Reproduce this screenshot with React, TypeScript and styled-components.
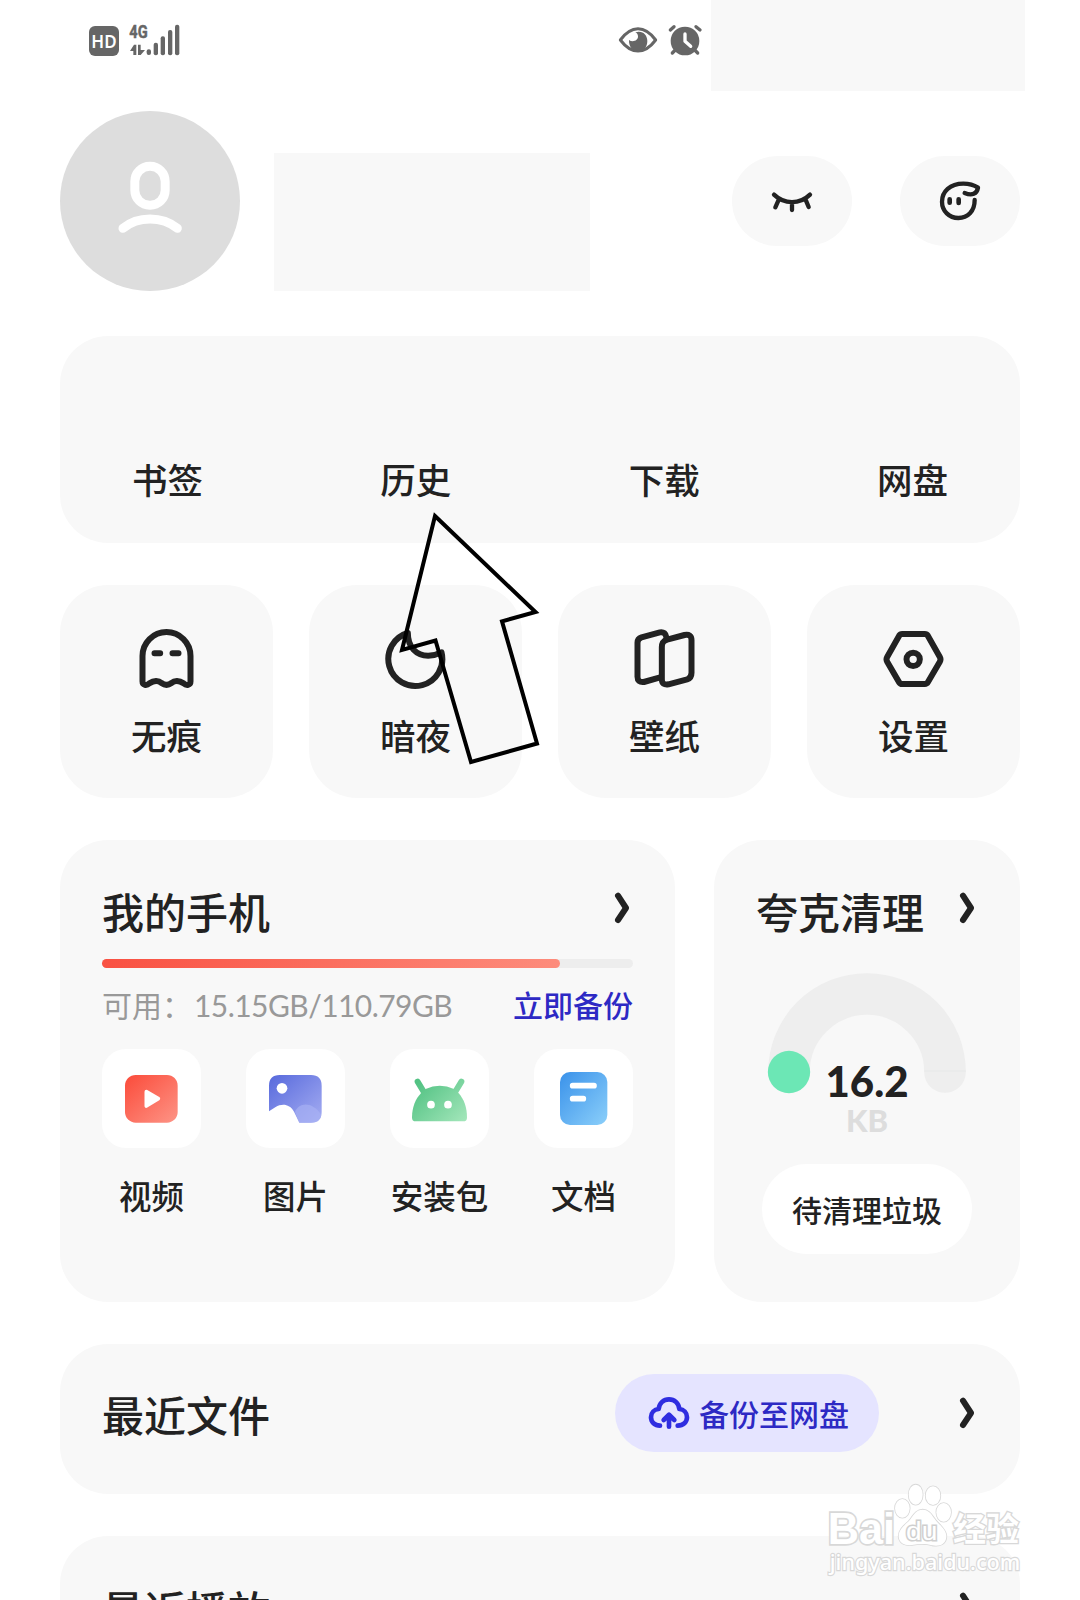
import React from "react";
import styled, { createGlobalStyle } from "styled-components";

const INK = "#222222";
const PANEL = "#f8f8f8";
const BLUE = "#2d29c4";

const GlobalStyle = createGlobalStyle`
  * { box-sizing: border-box; }
  html, body { margin: 0; background: #ffffff; }
  body {
    font-family: "Noto Sans CJK SC", "Noto Sans", sans-serif;
    font-weight: 500;
    color: ${INK};
  }
  svg { display: block; flex: none; }
`;

const Page = styled.main`
  position: relative;
  display: flex;
  flex-direction: column;
  width: 1080px;
  height: 1600px;
  overflow: hidden;
  background: #ffffff;
`;

const StatusBar = styled.header`
  display: flex;
  align-items: flex-start;
  justify-content: space-between;
  height: 90px;
  padding: 0 55px 0 89px;
`;

const StatusGroup = styled.div<{ $gap: number; $top: number }>`
  display: flex;
  align-items: flex-start;
  gap: ${(p) => p.$gap}px;
  padding-top: ${(p) => p.$top}px;
`;

const HdBadge = styled.span`
  display: flex;
  align-items: center;
  justify-content: center;
  width: 30px;
  height: 30px;
  margin-top: 4px;
  border-radius: 6px;
  background: #666666;
  color: #ffffff;
  font: 600 17px/31px "Noto Sans", sans-serif;
`;

const StatusRight = styled.div`
  display: flex;
  gap: 8px;
`;

const StatusMask = styled.div`
  width: 314.500px;
  height: 90.500px;
  background: ${PANEL};
`;

const Profile = styled.section`
  display: flex;
  align-items: center;
  height: 180px;
  margin: 21px 60px 0;
`;

const Avatar = styled.div`
  display: flex;
  align-items: center;
  justify-content: center;
  width: 180px;
  height: 180px;
  border-radius: 50%;
  background: #dddddd;
`;

const NameMask = styled.div`
  align-self: flex-end;
  width: 316px;
  height: 138px;
  margin: 0 auto 0 33.500px;
  background: ${PANEL};
`;

const RoundButton = styled.button`
  display: flex;
  align-items: center;
  justify-content: center;
  width: 120px;
  height: 90px;
  margin-left: 48px;
  padding: 0;
  border: 0;
  border-radius: 45px;
  background: ${PANEL};
`;

const Content = styled.div`
  display: flex;
  flex-direction: column;
  flex: none;
  gap: 42px;
  padding: 45px 60px 0;
`;

const Panel = styled.section`
  border-radius: 48px;
  background: ${PANEL};
`;

const Shortcuts = styled(Panel)`
  display: flex;
  align-items: flex-end;
  justify-content: space-between;
  height: 206.500px;
  padding: 0 72px 39px;
`;

const Label = styled.span<{ $size: number }>`
  font-size: ${(p) => p.$size}px;
  line-height: 50px;
  white-space: nowrap;
`;

const Tiles = styled.div`
  display: grid;
  grid-template-columns: repeat(4, 1fr);
  gap: 36px;
`;

const Tile = styled(Panel)`
  display: flex;
  flex-direction: column;
  align-items: center;
  gap: 19px;
  height: 213px;
  padding-top: 42.500px;
`;

const Split = styled.div`
  display: grid;
  grid-template-columns: 615px 306px;
  gap: 39px;
`;

const Card = styled(Panel)`
  display: flex;
  flex-direction: column;
  height: 462px;
  padding: 41px 42px 0;
`;

const TitleRow = styled.div`
  display: flex;
  align-items: center;
  justify-content: space-between;
  height: 60px;
  padding-right: 3px;
`;

const Title = styled.h2`
  margin: 0;
  font-size: 42px;
  font-weight: 500;
  line-height: 60px;
  white-space: nowrap;
`;

const ChevronBox = styled.span`
  padding-bottom: 5px;
`;

const Track = styled.div`
  height: 9px;
  margin-top: 18.500px;
  border-radius: 5px;
  background: #ededed;
`;

const Fill = styled.div`
  height: 9px;
  border-radius: 5px;
  background: linear-gradient(90deg, #f95142, #fd8c7c);
`;

const Meta = styled.div`
  display: flex;
  justify-content: space-between;
  align-items: center;
  height: 40px;
  margin-top: 16px;
  font-size: 30px;
  line-height: 40px;
  white-space: nowrap;
`;

const Free = styled.span`
  color: #999999;
  font-weight: 400;
`;

const Amount = styled.span`
  margin-left: 2px;
  font-family: Lato, sans-serif;
  letter-spacing: -0.550px;
`;

const BackupLink = styled.span`
  color: ${BLUE};
`;

const Files = styled.div`
  display: flex;
  justify-content: space-between;
  margin-top: 25px;
`;

const FileItem = styled.div`
  display: flex;
  flex-direction: column;
  align-items: center;
  gap: 22px;
  width: 99px;
`;

const FileIcon = styled.div`
  border-radius: 24px;
  background: #ffffff;
`;

const Gauge = styled.div`
  position: relative;
  height: 182px;
  margin: 32px -42px 0;
`;

const GaugeArc = styled.svg`
  margin: 0 auto;
`;

const Reading = styled.div`
  position: absolute;
  inset: 87px 0 auto;
  display: flex;
  flex-direction: column;
  align-items: center;
  font-family: Lato, sans-serif;
  font-weight: 900;
`;

const Value = styled.span`
  font-size: 42px;
  line-height: 42px;
`;

const Unit = styled.span`
  font-size: 31px;
  line-height: 37px;
  color: #dddddd;
`;

const CleanButton = styled.button`
  align-self: center;
  width: 210px;
  height: 90px;
  margin-top: 9px;
  padding: 0;
  border: 0;
  border-radius: 45px;
  background: #ffffff;
  color: ${INK};
  font: inherit;
  font-size: 30px;
  line-height: 88px;
`;

const ListRow = styled(Panel)<{ $shift?: number }>`
  display: flex;
  align-items: flex-start;
  height: 150px;
  padding: ${(p) => 30 + (p.$shift ?? 0)}px 45px 0 42px;
`;

const RowTitle = styled(Title)`
  margin: 10.500px auto 0 0;
`;

const BackupPill = styled.button`
  display: flex;
  align-items: center;
  gap: 9px;
  width: 264px;
  height: 78px;
  margin-right: 80px;
  padding: 0 0 0 33px;
  border: 0;
  border-radius: 39px;
  background: #e5e4ff;
  color: ${BLUE};
  font: inherit;
  font-size: 30px;
  line-height: 76px;
  white-space: nowrap;
`;

const RowChevron = styled.span`
  padding-top: 23px;
`;

const Pointer = styled.svg`
  position: absolute;
  left: 390px;
  top: 500px;
`;

const Watermark = styled.svg`
  position: absolute;
  left: 826.7px;
  top: 1483.3px;
`;

const Chevron = () => (
  <svg width="16" height="32" viewBox="732 217 48 96" fill="none" stroke={INK} strokeWidth="18" strokeLinecap="round" strokeLinejoin="round">
    <path d="M744 228 L768 265 L744 301" />
  </svg>
);

const Signal = () => (
  <svg width="54" height="36" viewBox="204 66 162 108" fill="#666666">
    <text x="208" y="115" fontFamily="Roboto, sans-serif" fontWeight="700" fontSize="57" stroke="#666666" strokeWidth="1.500" textLength="55" lengthAdjust="spacingAndGlyphs">4G</text>
    <path d="M210 153 L222 134 H229 V165 H220 V153 Z M234 134 H242 V150 H255 L242 165 H234 Z" />
    <rect x="260" y="148" width="13" height="17" rx="6" />
    <rect x="281" y="128" width="13" height="38" rx="6" />
    <rect x="302" y="109" width="13" height="57" rx="6" />
    <rect x="324" y="90" width="13" height="76" rx="6" />
    <rect x="345" y="74" width="13" height="92" rx="6" />
  </svg>
);

const EyeStatus = () => (
  <svg width="40" height="36" viewBox="114 66 120 108">
    <path d="M121 120 C154 75 194 75 227 120 C194 164 154 164 121 120 Z" fill="none" stroke="#666666" strokeWidth="9" strokeLinejoin="round" />
    <path d="M172 96 C190 93 202 107 202 123 C202 142 190 153 174 153 C158 153 146 140 147 120 C158 128 175 122 174 108 C173 102 170 99 166 97 Z" fill="#666666" />
  </svg>
);

const AlarmStatus = () => (
  <svg width="36" height="36" viewBox="261 66 108 108" fill="none" stroke="#666666" strokeWidth="10" strokeLinecap="round">
    <circle cx="315" cy="123" r="43" fill="#666666" stroke="none" />
    <path d="M271 90 L282 80 M348 80 L360 90 M286 150 L277 159 M344 150 L353 159" />
    <path d="M315 102 V124 L332 139" stroke="#ffffff" strokeWidth="10" strokeLinejoin="round" />
  </svg>
);

const PersonIcon = () => (
  <svg width="90" height="90" viewBox="135 468 270 270" fill="none" stroke="#ffffff" strokeWidth="27" strokeLinecap="round">
    <rect x="224.500" y="499" width="91" height="117" rx="45" />
    <path d="M189 685 C234 648 306 648 352 685" />
  </svg>
);

const ClosedEyeIcon = () => (
  <svg width="60" height="60" viewBox="546 513 180 180" fill="none" stroke={INK} strokeWidth="13" strokeLinecap="round">
    <path d="M582 584 C613 614 659 614 690 584 M595 602 L586 622 M636 609 V630 M678 602 L686 621" />
  </svg>
);

const FaceIcon = () => (
  <svg width="60" height="60" viewBox="1050 513 180 180" fill="none" stroke={INK} strokeWidth="13" strokeLinecap="round" strokeLinejoin="round">
    <path d="M1154 579 C1176 588 1191 582 1194 563 C1180 554 1165 551 1150 551 C1110 551 1086 575 1086 605 C1086 633 1108 654 1135 654 C1163 654 1184 634 1184 600" />
    <path d="M1109 598 V608 M1136 598 V609" strokeWidth="14" />
  </svg>
);

const tileSvg = { width: 64, height: 64, fill: "none", stroke: INK, strokeWidth: 18, strokeLinecap: "round", strokeLinejoin: "round" } as const;

const GhostIcon = () => (
  <svg {...tileSvg} viewBox="285.500 201 192 192">
    <path d="M308 288 a72 72 0 0 1 144 0 V364 C452 376 440 378 431 370 C418 361 404 361 395 369 C384 377 376 377 365 369 C356 361 342 361 329 370 C320 378 308 376 308 364 Z" />
    <path d="M344 280 H361 M398 280 H416" />
  </svg>
);

const MoonIcon = () => (
  <svg {...tileSvg} viewBox="1032.500 201 192 192">
    <path d="M1104 219 A81 81 0 1 0 1205 277 C1193 283 1180 287 1165 287 C1130 287 1104 262 1104 219 Z" />
  </svg>
);

const WallpaperIcon = () => (
  <svg {...tileSvg} viewBox="279.500 201 192 192">
    <path d="M366 262 C366 248 370 243 382 239 L434 225 Q455 221 455 240 V338 Q455 354 442 358 L386 373 Q366 376 366 358 Z" />
    <path d="M361 352 L312 366 Q293 368 293 350 V248 Q293 236 305 232 L360 217 Q377 214 380 233" />
  </svg>
);

const SettingsIcon = () => (
  <svg {...tileSvg} viewBox="1026.500 201 192 192">
    <path d="M1087 222 H1155 Q1161 222 1164 227 L1200 291 Q1204 298 1200 305 L1164 367 Q1161 372 1155 372 H1087 Q1081 372 1078 367 L1042 305 Q1038 298 1042 291 L1078 227 Q1081 222 1087 222 Z" />
    <circle cx="1120" cy="298" r="20" />
  </svg>
);

const VideoIcon = () => (
  <svg width="99" height="99" viewBox="187 687 297 297">
    <defs>
      <linearGradient id="video" x1="0" y1="0" x2="1" y2="1">
        <stop offset="0" stopColor="#fb4b3a" />
        <stop offset="1" stopColor="#fd9486" />
      </linearGradient>
    </defs>
    <rect x="256" y="765" width="158" height="143" rx="32" fill="url(#video)" />
    <path d="M320 815 L356 836 L320 858 Z" fill="#ffffff" stroke="#ffffff" strokeWidth="11" strokeLinejoin="round" />
  </svg>
);

const PictureIcon = () => (
  <svg width="99" height="99" viewBox="619 687 297 297">
    <defs>
      <linearGradient id="picture" x1="0" y1="0" x2="1" y2="1">
        <stop offset="0" stopColor="#5769dc" />
        <stop offset="1" stopColor="#a5adf2" />
      </linearGradient>
    </defs>
    <path d="M688 874 V797 Q688 765 720 765 H814 Q846 765 846 797 V876 Q846 908 814 908 H779 L763 875 C750 850 725 850 708 861 Z" fill="url(#picture)" />
    <path d="M766 876 C775 850 815 840 845 885 Q842 908 814 908 H779 Z" fill="#a9b2f5" fillOpacity="0.650" />
    <circle cx="727" cy="805" r="16" fill="#ffffff" />
  </svg>
);

const AndroidIcon = () => (
  <svg width="99" height="99" viewBox="60 687 297 297">
    <defs>
      <linearGradient id="android" gradientUnits="userSpaceOnUse" x1="140" y1="790" x2="270" y2="920">
        <stop offset="0" stopColor="#52c283" />
        <stop offset="1" stopColor="#a3e6ba" />
      </linearGradient>
    </defs>
    <path d="M143 785 L162 817 M274 785 L255 817" stroke="url(#android)" strokeWidth="18" strokeLinecap="round" />
    <path d="M126 893 C126 862 137 836 153 820 L167 807 Q209 788 252 807 L266 820 C282 838 291 862 291 893 Q291 904 280 904 H137 Q126 904 126 893 Z" fill="url(#android)" />
    <circle cx="183" cy="854" r="11.500" fill="#ffffff" />
    <circle cx="234" cy="854" r="11.500" fill="#ffffff" />
  </svg>
);

const DocIcon = () => (
  <svg width="99" height="99" viewBox="492 687 297 297">
    <defs>
      <linearGradient id="doc" x1="0" y1="0" x2="1" y2="1">
        <stop offset="0" stopColor="#3a92ea" />
        <stop offset="1" stopColor="#8bcffa" />
      </linearGradient>
    </defs>
    <rect x="570" y="756" width="142" height="159" rx="30" fill="url(#doc)" />
    <path d="M608 797 H672 M608 836 H640" stroke="#ffffff" strokeWidth="17" strokeLinecap="round" />
  </svg>
);

const CloudIcon = () => (
  <svg width="42" height="36" viewBox="264 222 126 108" fill="none" stroke="#2f2de0" strokeWidth="14" strokeLinecap="round" strokeLinejoin="round">
    <path d="M300 314 C284 314 273 303 273 289 C273 275 283 265 296 264 C298 246 311 235 327 235 C343 235 356 246 358 264 C371 265 381 275 381 289 C381 303 370 314 353 314" />
    <path d="M327 317 V282 M311 297 L327 281 L343 297" />
  </svg>
);

const tiles = [
  { name: "无痕", Icon: GhostIcon },
  { name: "暗夜", Icon: MoonIcon },
  { name: "壁纸", Icon: WallpaperIcon },
  { name: "设置", Icon: SettingsIcon },
];

const files = [
  { name: "视频", Icon: VideoIcon },
  { name: "图片", Icon: PictureIcon },
  { name: "安装包", Icon: AndroidIcon },
  { name: "文档", Icon: DocIcon },
];

const storage = { free: 15.15, total: 110.79 };

export default function App() {
  const used = (1 - storage.free / storage.total) * 100;
  return (
    <Page>
      <GlobalStyle />
      <StatusBar>
        <StatusGroup $gap={9} $top={22}>
          <HdBadge>HD</HdBadge>
          <Signal />
        </StatusGroup>
        <StatusRight>
          <StatusGroup $gap={9} $top={22}>
            <EyeStatus />
            <AlarmStatus />
          </StatusGroup>
          <StatusMask />
        </StatusRight>
      </StatusBar>

      <Profile>
        <Avatar><PersonIcon /></Avatar>
        <NameMask />
        <RoundButton><ClosedEyeIcon /></RoundButton>
        <RoundButton><FaceIcon /></RoundButton>
      </Profile>

      <Content>
        <Shortcuts>
          {["书签", "历史", "下载", "网盘"].map((name) => (
            <Label key={name} $size={35.5}>{name}</Label>
          ))}
        </Shortcuts>

        <Tiles>
          {tiles.map(({ name, Icon }) => (
            <Tile key={name}>
              <Icon />
              <Label $size={35.5}>{name}</Label>
            </Tile>
          ))}
        </Tiles>

        <Split>
          <Card>
            <TitleRow>
              <Title>我的手机</Title>
              <ChevronBox><Chevron /></ChevronBox>
            </TitleRow>
            <Track><Fill style={{ width: `${used}%` }} /></Track>
            <Meta>
              <Free>可用：<Amount>{storage.free}GB/{storage.total}GB</Amount></Free>
              <BackupLink>立即备份</BackupLink>
            </Meta>
            <Files>
              {files.map(({ name, Icon }) => (
                <FileItem key={name}>
                  <FileIcon><Icon /></FileIcon>
                  <Label $size={32.5}>{name}</Label>
                </FileItem>
              ))}
            </Files>
          </Card>

          <Card>
            <TitleRow>
              <Title>夸克清理</Title>
              <ChevronBox><Chevron /></ChevronBox>
            </TitleRow>
            <Gauge>
              <GaugeArc width="200" height="122" viewBox="201 459 600 366" fill="none">
                <path d="M267 756 A234 234 0 0 1 735 756" stroke="#eeeeee" strokeWidth="125" strokeLinecap="round" />
                <path d="M673 753 H798" stroke="#e6e8e8" strokeWidth="3" />
                <circle cx="267" cy="756" r="63.500" fill="#6ce7b5" />
              </GaugeArc>
              <Reading>
                <Value>16.2</Value>
                <Unit>KB</Unit>
              </Reading>
            </Gauge>
            <CleanButton>待清理垃圾</CleanButton>
          </Card>
        </Split>

        <ListRow>
          <RowTitle>最近文件</RowTitle>
          <BackupPill><CloudIcon />备份至网盘</BackupPill>
          <RowChevron><Chevron /></RowChevron>
        </ListRow>

        <ListRow $shift={3}>
          <RowTitle>最近播放</RowTitle>
          <RowChevron><Chevron /></RowChevron>
        </ListRow>
      </Content>

      <Pointer width="160" height="275" viewBox="390 500 160 275" fill="none" stroke="#000000" strokeWidth="4">
        <path d="M435 516 L535.500 612 L502 621.300 L537 743.500 L471 762 L435.500 640.500 L402 650 Z" />
      </Pointer>

      <Watermark width="196.700" height="93.300" viewBox="800 490 590 280" fill="#ffffff" stroke="#d8d8d8" strokeWidth="5" paintOrder="stroke">
        <text x="802" y="672" fontFamily="Liberation Sans, sans-serif" fontWeight="700" fontSize="132" strokeWidth="10" textLength="202" lengthAdjust="spacingAndGlyphs">Bai</text>
        <ellipse cx="1026" cy="566" rx="22" ry="28" />
        <ellipse cx="1066" cy="525" rx="21" ry="30" />
        <ellipse cx="1118" cy="528" rx="22" ry="28" />
        <ellipse cx="1150" cy="578" rx="22" ry="28" />
        <path d="M1087 570 C1065 570 1058 590 1045 605 C1028 620 1014 632 1015 652 C1017 672 1036 679 1055 676 C1078 671 1098 672 1115 677 C1140 682 1159 672 1158 648 C1157 630 1140 618 1127 603 C1115 588 1108 570 1087 570 Z" />
        <text x="1037" y="660" fontFamily="Liberation Sans, sans-serif" fontSize="80" stroke="#cfcfcf" strokeWidth="9" textLength="94" lengthAdjust="spacingAndGlyphs">du</text>
        <text x="1178" y="664" fontFamily="Noto Sans CJK SC, sans-serif" fontWeight="700" fontSize="99" strokeWidth="8">经验</text>
        <text x="808" y="751" fontFamily="Noto Sans, sans-serif" fontWeight="500" fontSize="66" strokeWidth="7" textLength="572" lengthAdjust="spacingAndGlyphs">jingyan.baidu.com</text>
      </Watermark>
    </Page>
  );
}
